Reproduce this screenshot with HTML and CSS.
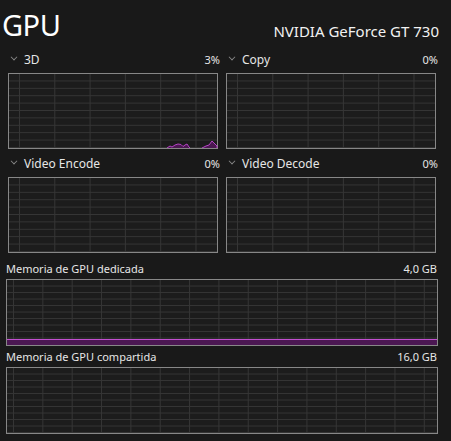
FILE: index.html
```html
<!DOCTYPE html>
<html>
<head>
<meta charset="utf-8">
<link rel="stylesheet" href="styles.css">
</head>
<body>
<div class="page">
  <header class="head">
    <h1 class="title">GPU</h1>
    <div class="model">NVIDIA GeForce GT 730</div>
  </header>

  <div class="engines">
    <section class="engine">
      <div class="elabel"><span class="chev"></span><span class="ename">3D</span><span class="pct">3%</span></div>
      <div class="graph small">
        <svg class="trace" width="210" height="20" viewBox="0 0 210 20">
          <polyline points="159,20 162,18 164,19 167,17 170,16 173,16.5 175,18.5 177,17 179,16 181,19 182,20" fill="#4a1850" stroke="#b443c4" stroke-width="1"/>
          <polyline points="194,20 198,18 201,17 204,13 206,15 208,17 209,18 209,20" fill="#4a1850" stroke="#b443c4" stroke-width="1"/>
        </svg>
      </div>
    </section>
    <section class="engine">
      <div class="elabel"><span class="chev"></span><span class="ename">Copy</span><span class="pct">0%</span></div>
      <div class="graph small"></div>
    </section>
    <section class="engine">
      <div class="elabel"><span class="chev"></span><span class="ename">Video Encode</span><span class="pct">0%</span></div>
      <div class="graph small"></div>
    </section>
    <section class="engine">
      <div class="elabel"><span class="chev"></span><span class="ename">Video Decode</span><span class="pct">0%</span></div>
      <div class="graph small"></div>
    </section>
  </div>

  <section class="mem">
    <div class="mlabel"><span>Memoria de GPU dedicada</span><span>4,0 GB</span></div>
    <div class="graph big"><div class="usage"></div></div>
  </section>
  <section class="mem">
    <div class="mlabel"><span>Memoria de GPU compartida</span><span>16,0 GB</span></div>
    <div class="graph big"></div>
  </section>
</div>
</body>
</html>
```

FILE: styles.css
```css
html, body {
  margin: 0;
  padding: 0;
  background: #191919;
}
body {
  font-family: "Noto Sans", "Open Sans", sans-serif;
  color: #e6e6e6;
  width: 451px;
  height: 441px;
  overflow: hidden;
}
.page {
  padding: 0 13px 0 6px;
}
.head {
  display: flex;
  justify-content: space-between;
  align-items: flex-end;
  height: 42px;
}
.title {
  margin: 0 0 0 -4px;
  font-weight: 400;
  font-size: 29px;
  line-height: 34px;
  color: #ffffff;
  letter-spacing: -0.5px;
}
.model {
  font-size: 15px;
  line-height: 20px;
  margin: 0 -1px 1px 0;
  color: #f2f2f2;
}
.engines {
  display: grid;
  grid-template-columns: 212px 212px;
  column-gap: 6px;
  row-gap: 6px;
  margin-left: 2px;
  margin-top: 9px;
}
.engine {
  display: flex;
  flex-direction: column;
}
.elabel {
  display: flex;
  align-items: center;
  height: 16px;
  font-size: 12px;
  margin-bottom: 6px;
}
.chev {
  width: 5px;
  height: 5px;
  border-right: 1px solid #8c8c8c;
  border-bottom: 1px solid #8c8c8c;
  transform: rotate(45deg) scale(0.8);
  margin: -4px 7px 0 3px;
}
.ename {
  flex: 1;
}
.pct {
  font-size: 11px;
}
.graph {
  position: relative;
  box-sizing: border-box;
  border: 1px solid #878787;
  background-color: #1c1c1c;
}
.graph.small {
  width: 210px;
  height: 76px;
  background-image:
    linear-gradient(to right, #353535 1px, transparent 1px),
    linear-gradient(to bottom, transparent calc(100% - 1px), #353535 calc(100% - 1px));
  background-size: 35.3px 100%, 100% 10%;
  background-position: 10px 0, 0 0;
}
.trace {
  position: absolute;
  left: -1px;
  bottom: 0;
}
.mem {
  display: flex;
  flex-direction: column;
}
.mlabel {
  display: flex;
  justify-content: space-between;
  font-size: 11px;
  height: 15px;
  align-items: center;
  margin-bottom: 3px;
  padding-right: 1px;
}
.engines + .mem {
  margin-top: 8px;
}
.mem + .mem {
  margin-top: 3px;
}
.graph.big {
  width: 432px;
  height: 67px;
  display: flex;
  flex-direction: column;
  justify-content: flex-end;
  background-image:
    linear-gradient(to right, #353535 1px, transparent 1px),
    linear-gradient(to bottom, transparent calc(100% - 1px), #353535 calc(100% - 1px));
  background-size: 29.35px 100%, 100% 10%;
  background-position: 6px 0, 0 0;
}
.usage {
  height: 5px;
  border-top: 1px solid #c24fd0;
  background: #4b1752;
}
```
